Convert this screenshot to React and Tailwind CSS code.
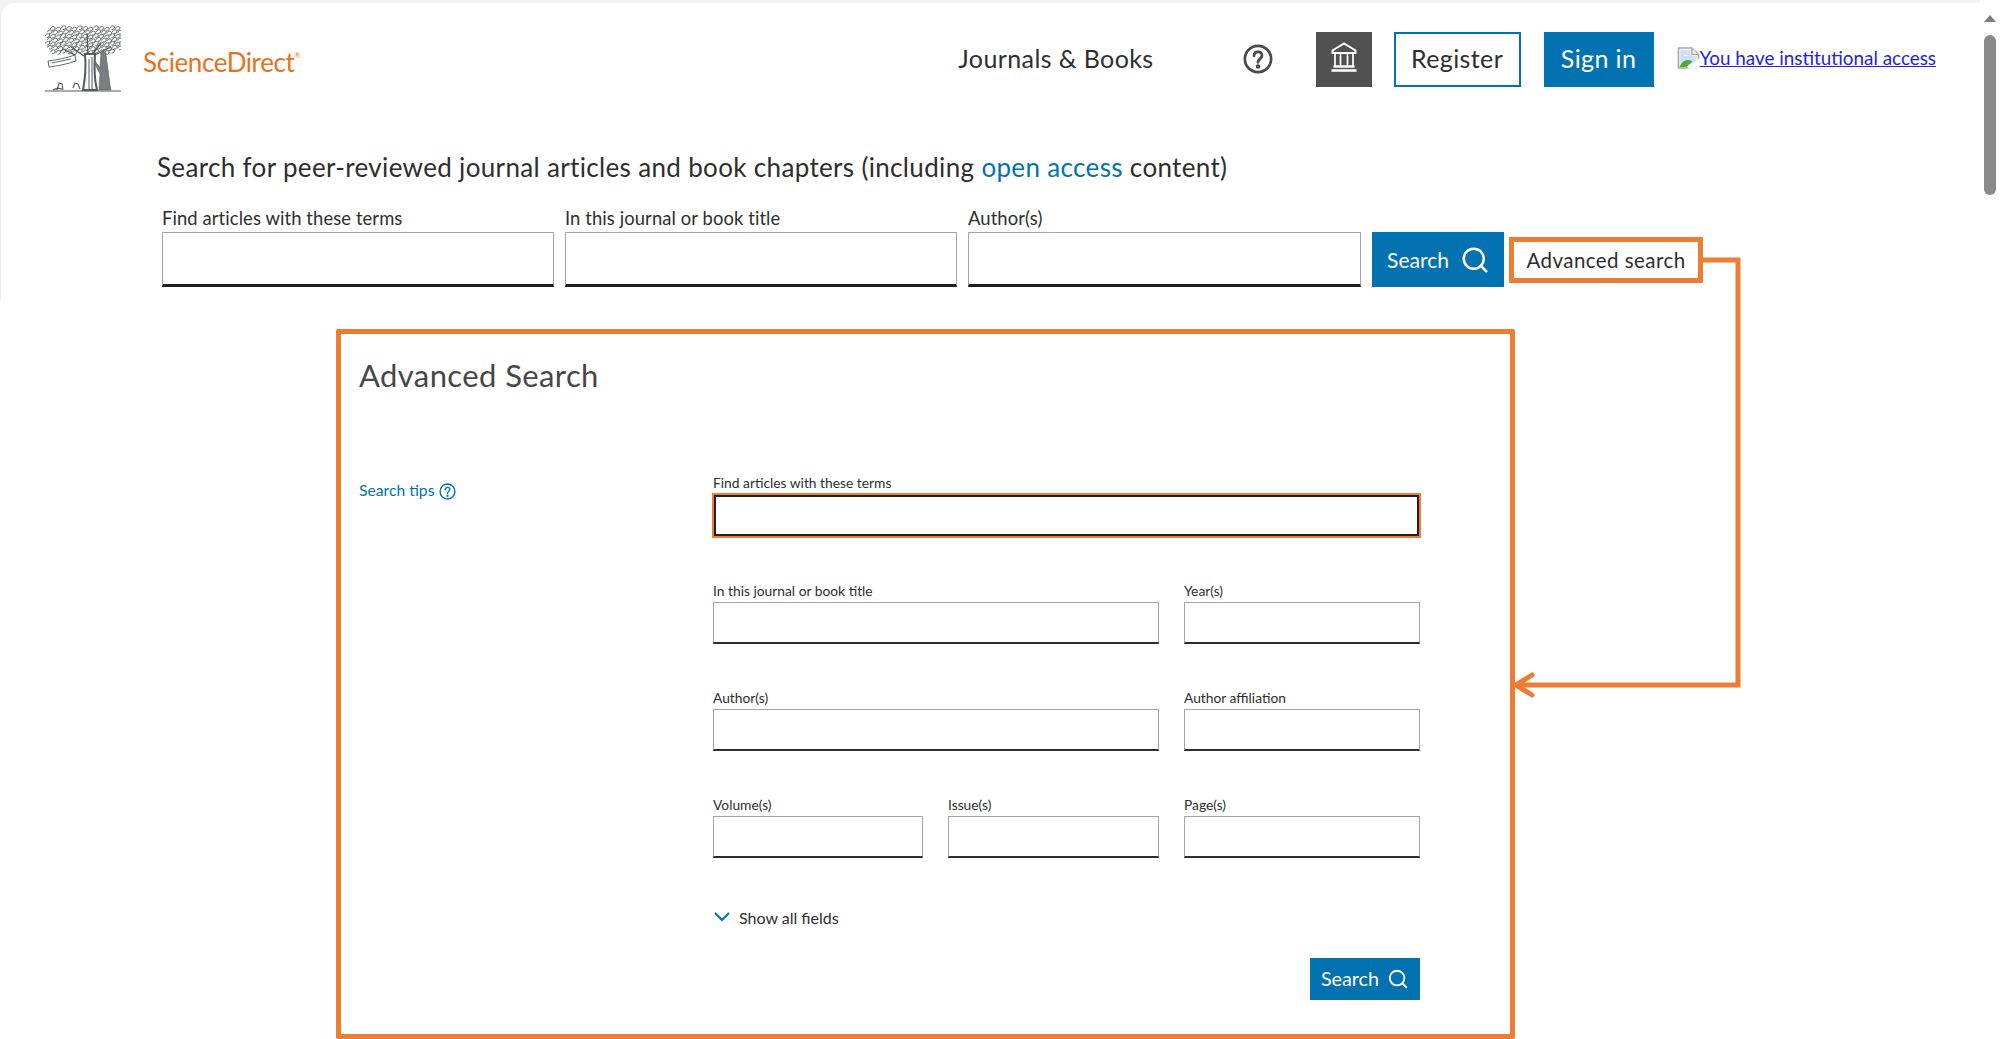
import React from 'react';
import { Search } from 'lucide-react';

const font = { fontFamily: 'Lato, "Noto Sans", sans-serif' };

// leafy crown of the publisher tree, just little scribbled loops
const leaves = [];
for (let row = 0; row < 7; row++) {
    for (let col = 0; col < 14; col++) {
        const x = 2.5 + col * 5.4 + (row % 2) * 2.4;
        const y = 2.5 + row * 3.9 + ((col * 7) % 3) * 0.7;
        const dx = (x - 38) / 39;
        const dy = (y - 14) / 15;
        if (dx * dx * dx * dx + dy * dy * dy * dy < 1) leaves.push([x, y, (row * 3 + col * 5) % 4]);
    }
}

function TreeLogo() {
    return (
        <svg width="76" height="68" viewBox="0 0 76 68" className="shrink-0" fill="none" stroke="#55585a">
            {leaves.map(([x, y, k], i) => (
                <path key={i} strokeWidth="1" d={`M${x - 2.4} ${y + 0.6}c1-2.6 3.400-2.800 4.600-1.200c${k * 0.2} 1.800-1.400 3-3 2.600`} />
            ))}
            <path strokeWidth="1.300" d="M26 22l13 9M56 18l-9 12M42 8l1 22M18 24l12 6M66 22l-16 8" />
            <path fill="#fff" strokeWidth="2" d="M40 29c1 12 0 26-2 36h14c-2-8-3-22-2-36z" />
            <path fill="none" strokeWidth="1" d="M44 34v30M47 32v32" />
            <path fill="#7b7d80" strokeWidth="0.6" d="M56 28c3-3 5-1 5 2l4 30l1 5H54l1-16l-6-12l1-1l5 7z" />
            <path fill="#fff" strokeWidth="0.9" d="M3 36c9-1 18-3 27-6l1 6c-9 3-18 5-27 6z" />
            <path strokeWidth="0.9" d="M7 38l19-4" />
            <path strokeWidth="1.100" d="M0 66h76M8 65c3-2 6-2 9-1M12 65l2-7l3 1l1 6M28 63l2-5l3 1l2 5" />
        </svg>
    );
}

function BrokenImage() {
    return (
        <svg width="23" height="22" viewBox="0 0 16 16" className="shrink-0 self-start">
            <path d="M.7.700h9.800l4.800 4.800v9.800H.7z" fill="#fff" stroke="#a8a8a8" strokeWidth="1.200" />
            <path d="M10.500.7v4.800h4.800" fill="#e8e8e8" stroke="#a8a8a8" />
            <path d="M2 2h7.500v4.500h4.500V12H2z" fill="#cfe0f6" />
            <path d="M4 6.500c1-1.200 3-1.200 4 0z" fill="#fff" />
            <path d="M1.500 14.500c1.500-4 5-6 8.500-4.500l1 .6l-4.500 3.900z" fill="#4caf2e" />
            <path d="M7 15.500L16 8v8z" fill="#fff" />
            <path d="M16 9v7H9" fill="none" stroke="#fff" />
        </svg>
    );
}

function HelpCircle({ size, color, width }) {
    return (
        <svg width={size} height={size} viewBox="0 0 24 24" fill="none" stroke={color} strokeWidth={width}>
            <circle cx="12" cy="12" r="10.500" />
            <path strokeLinecap="round" d="M8.800 9.400c0-2 1.400-3.200 3.200-3.200s3.200 1.200 3.200 3c0 2.600-3.200 2.800-3.200 5.400" />
            <circle cx="12" cy="18" r="0.7" fill={color} />
        </svg>
    );
}

function Institution() {
    return (
        <svg width="28" height="30" viewBox="0 0 28 30" fill="none" stroke="#fff" strokeWidth="2" className="mb-[5px]">
            <path d="M14 1.500L2.500 8.500v2.500h23V8.500z" />
            <path d="M5 11v13M10.500 11v13M17.500 11v13M23 11v13" strokeWidth="1.700" />
            <path d="M3.500 24.500h21M1.500 28.500h25" strokeWidth="2.600" />
        </svg>
    );
}

function TopField({ label, className }) {
    return (
        <label className={`flex flex-col ${className}`}>
            <span className="text-[18.4px] leading-[22px] text-[#2e2e2e] tracking-[0.1px]">{label}</span>
            <span className="mt-[3px] block h-[55px] bg-white border border-[#a5a5a5] border-b-[3px] border-b-[#1f1f1f]" />
        </label>
    );
}

function FormField({ label, className, focused }) {
    return (
        <div className={`flex flex-col ${className}`}>
            <span className="text-[13.8px] leading-[16px] text-[#2e2e2e]">{label}</span>
            {focused ? (
                <span className="mt-[2px] -mx-[1px] block h-[45px] bg-white border-2 border-[#ed7d31]">
                    <span className="block h-full border-2 border-[#1f1f1f]" />
                </span>
            ) : (
                <span className="mt-[3px] block h-[42px] bg-white border border-[#a5a5a5] border-b-2 border-b-[#2e2e2e]" />
            )}
        </div>
    );
}

// the orange callout running from "Advanced search" to the panel
function Connector() {
    return (
        <svg width="250" height="460" viewBox="0 0 250 460" fill="none" stroke="#ed7d31" className="absolute left-[1510px] top-[250px]">
            <path strokeWidth="5" d="M193 10h35v425H6" />
            <path strokeWidth="5" strokeLinecap="round" d="M22 425L6 435l16 10" />
        </svg>
    );
}

function Scrollbar() {
    return (
        <div className="w-[20px] shrink-0 bg-white flex flex-col items-center pt-[15px]">
            <div className="w-0 h-0 border-x-[6px] border-x-transparent border-b-[7px] border-b-[#7d7d7d]" />
            <div className="mt-[13px] w-[12px] h-[160px] rounded-full bg-[#8a8a8a]" />
        </div>
    );
}

export default function App() {
    return (
        <div style={font} className="relative w-[2000px] h-[1039px] overflow-hidden bg-white flex">
            <div className="flex-1 min-w-0">
                <div className="h-[300px] bg-[#f3f3f3] pt-[3px]">
                    <div className="h-full bg-white rounded-tl-[14px] border-l border-[#ededed]">
                        <header className="flex items-center h-[86px] pl-[44px] pr-[44px] pt-[26px]">
                            <TreeLogo />
                            <span className="ml-[22px] mt-[5px] text-[26px] tracking-[-0.4px] text-[#e9711c] leading-none">
                                ScienceDirect<sup className="text-[7px] align-super">®</sup>
                            </span>
                            <div className="ml-auto flex items-center">
                                <a className="text-[25px] text-[#2e2e2e] tracking-[0.4px]">Journals &amp; Books</a>
                                <span className="ml-[89px] block w-[30px] h-[30px]">
                                    <HelpCircle size={30} color="#4a4a4a" width={2.2} />
                                </span>
                                <span className="ml-[43px] flex items-center justify-center w-[56px] h-[55px] bg-[#505050]">
                                    <Institution />
                                </span>
                                <span className="ml-[22px] flex items-center justify-center w-[127px] h-[55px] border-2 border-[#0272b1] text-[25px] text-[#2e2e2e] tracking-[0.4px]">Register</span>
                                <span className="ml-[23px] flex items-center justify-center w-[110px] h-[55px] bg-[#0272b1] text-[25px] text-white tracking-[0.4px]">Sign in</span>
                                <a className="ml-[23px] flex items-start h-[24px] text-[18.85px] leading-[22px] text-[#2222e6] underline">
                                    <BrokenImage />
                                    You have institutional access
                                </a>
                            </div>
                        </header>
                        <h1 className="mt-[62px] ml-[156px] text-[26px] leading-[32px] text-[#2e2e2e] tracking-[0.34px]">
                            Search for peer-reviewed journal articles and book chapters (including <a className="text-[#0272b1]">open access</a> content)
                        </h1>
                        <div className="mt-[24px] ml-[161px] flex items-end">
                            <TopField label="Find articles with these terms" className="w-[392px]" />
                            <TopField label="In this journal or book title" className="w-[392px] ml-[11px]" />
                            <TopField label="Author(s)" className="w-[393px] ml-[11px]" />
                            <button className="ml-[11px] w-[132px] h-[55px] bg-[#0272b1] text-white text-[21px] flex items-center justify-center gap-[11px] pl-[1px]">
                                Search <Search size={30} strokeWidth={2} />
                            </button>
                            <span className="ml-[5px] mb-[4px] flex items-center justify-center w-[194px] h-[46px] border-[5px] border-[#ed7d31] text-[20.5px] text-[#2e2e2e] tracking-[0.45px]">
                                Advanced search
                            </span>
                        </div>
                    </div>
                </div>

                <section className="mt-[29px] ml-[336px] w-[1179px] h-[710px] border-[5px] border-[#ed7d31] rounded-[2px] pl-[18px] pr-[90px]">
                    <h2 className="mt-[21px] text-[31px] leading-[40px] text-[#474747] tracking-[0.4px]">Advanced Search</h2>
                    <div className="flex mt-[80px]">
                        <a className="w-[354px] shrink-0 mt-[6px] h-[20px] flex items-center gap-[5px] text-[15.700px] text-[#0272b1]">
                            Search tips <HelpCircle size={17} color="#0272b1" width={2} />
                        </a>
                        <form className="flex-1 flex flex-col">
                            <FormField label="Find articles with these terms" focused />
                            <div className="mt-[45px] flex gap-[25px]">
                                <FormField label="In this journal or book title" className="w-[446px]" />
                                <FormField label="Year(s)" className="flex-1" />
                            </div>
                            <div className="mt-[46px] flex gap-[25px]">
                                <FormField label="Author(s)" className="w-[446px]" />
                                <FormField label="Author affiliation" className="flex-1" />
                            </div>
                            <div className="mt-[46px] flex gap-[25px]">
                                <FormField label="Volume(s)" className="w-[210px]" />
                                <FormField label="Issue(s)" className="w-[211px]" />
                                <FormField label="Page(s)" className="flex-1" />
                            </div>
                            <div className="mt-[49px] flex items-center h-[22px] text-[16px] text-[#2e2e2e]">
                                <svg width="18" height="12" viewBox="0 0 18 12" fill="none" stroke="#0272b1" strokeWidth="2" className="mb-[3px]">
                                    <path d="M2 2l7 7l7-7" />
                                </svg>
                                <span className="ml-[8px]">Show all fields</span>
                            </div>
                            <div className="mt-[29px] flex justify-end">
                                <button className="w-[110px] h-[42px] bg-[#0272b1] text-white text-[19.800px] flex items-center justify-center gap-[8px]">
                                    Search <Search size={22} strokeWidth={2} />
                                </button>
                            </div>
                        </form>
                    </div>
                </section>
            </div>
            <Scrollbar />
            <Connector />
        </div>
    );
}
